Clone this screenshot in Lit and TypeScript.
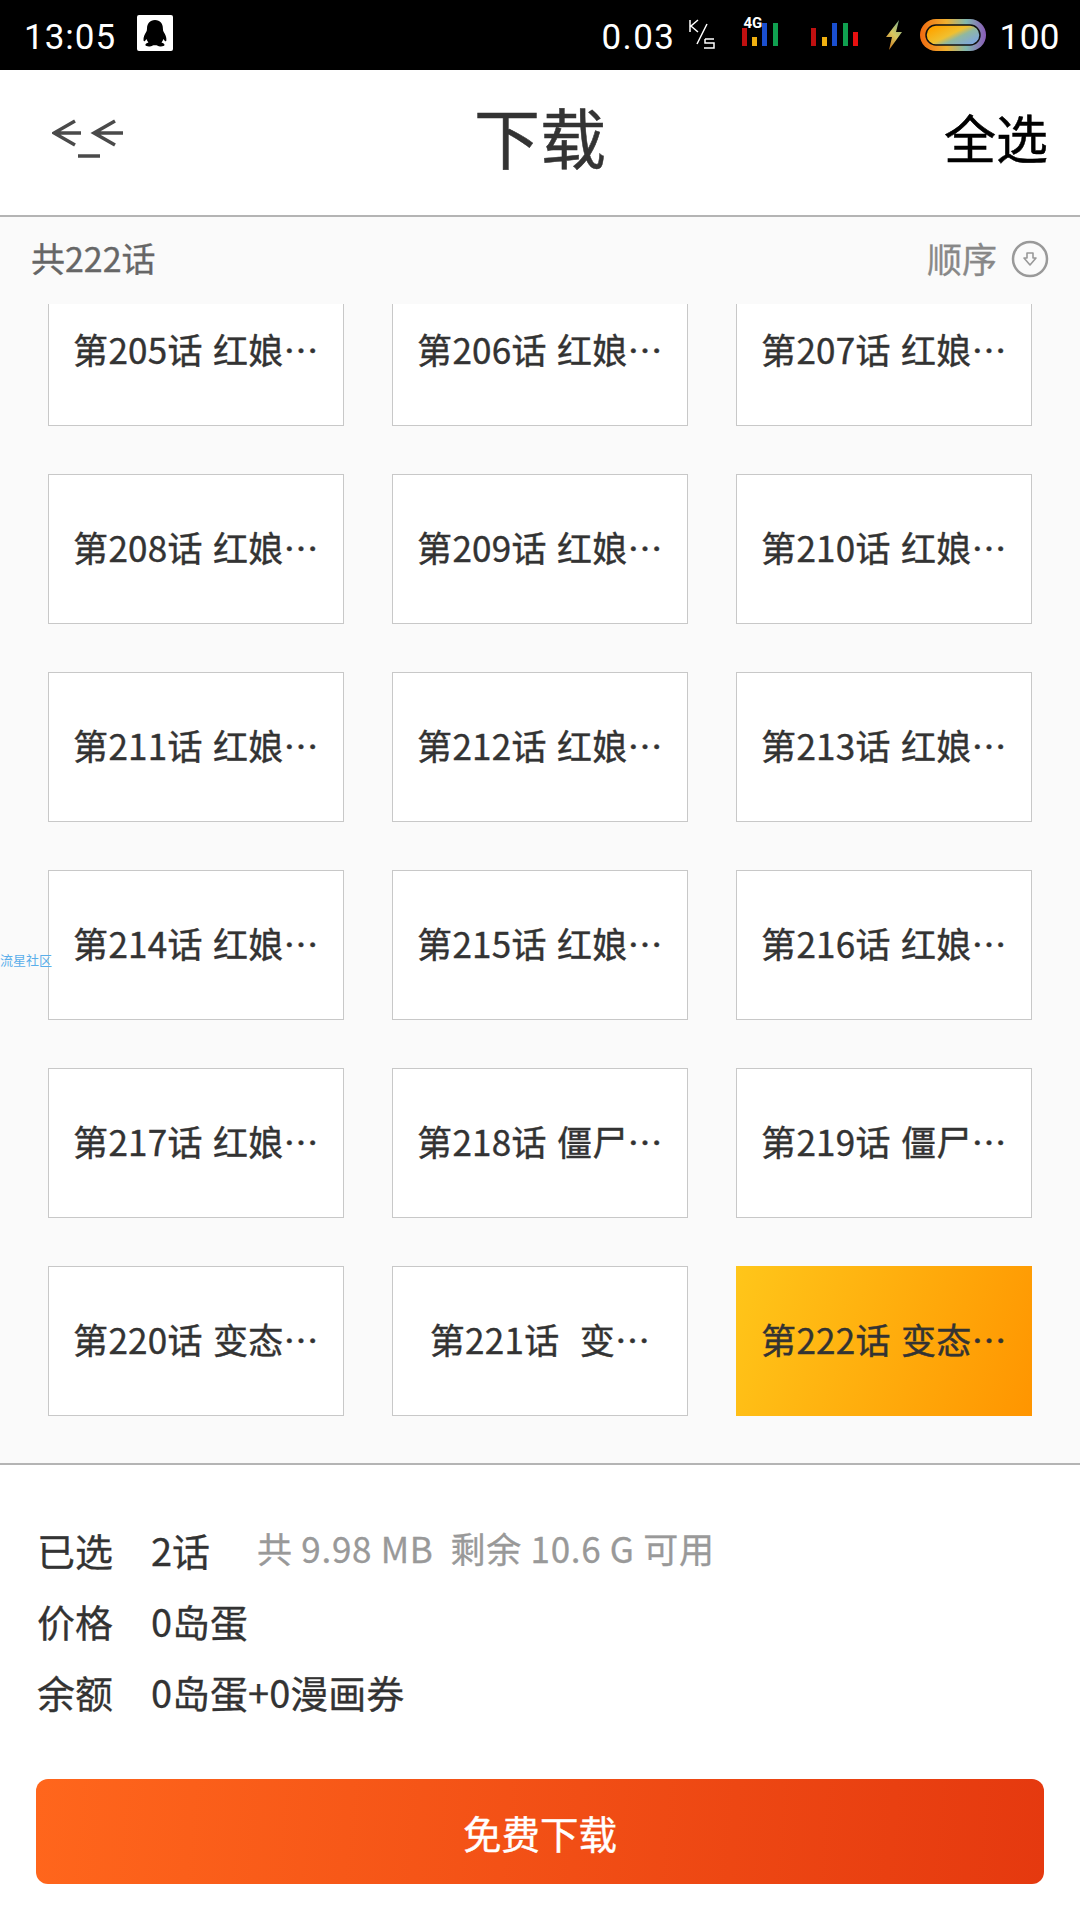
import { LitElement, html, css } from "lit";
import { customElement } from "lit/decorators.js";

interface Item { t: string; sel?: boolean; }
const ITEMS: Item[] = [
  ...[205, 206, 207, 208, 209, 210, 211, 212, 213, 214, 215, 216, 217].map((n) => ({ t: `第${n}话 红娘…` })),
  { t: "第218话 僵尸…" },
  { t: "第219话 僵尸…" },
  { t: "第220话 变态…" },
  { t: "第221话  变…" },
  { t: "第222话 变态…", sel: true },
];

@customElement("app-root")
export class AppRoot extends LitElement {
  static styles = css`
    :host { display: block; width: 1080px; height: 1920px; position: relative; overflow: hidden;
      background: #fff; font-family: "Noto Sans CJK SC", Roboto, sans-serif; }
    .status { height: 70px; background: #000; color: #fff; display: flex; align-items: center;
      font-family: Roboto, sans-serif; font-size: 35px; padding: 0 20px 0 24px; box-sizing: border-box; }
    .time { width: 113px; letter-spacing: 1px; margin-top: 5px; }
    .qq { width: 36px; height: 36px; background: #fff; border-radius: 2px; margin-top: -4px; display: block; }
    .spacer { flex: 1; }
    .speed { letter-spacing: 1.4px; margin-top: 5px; width: 87px; }
    .ks { display: block; width: 28px; height: 32px; }
    .net { position: relative; margin-left: 26px; width: 38px; height: 36px; }
    .net svg { display: block; width: 38px; height: 36px; }
    .g4 { position: absolute; left: 1px; top: 0; font-size: 15px; line-height: 13px; font-weight: 700; color: #fff; }
    .bars2 { display: block; margin-left: 31px; width: 50px; height: 32px; }
    .bolt { display: block; margin-left: 23px; width: 20px; height: 32px; }
    .batt { display: block; margin-left: 16px; width: 66px; height: 32px; }
    .pct { margin-left: 13px; margin-top: 5px; letter-spacing: 0.5px; }

    .nav { height: 147px; box-sizing: border-box; border-bottom: 2px solid #b4b4b4; display: grid;
      grid-template-columns: 1fr auto 1fr; align-items: center; padding: 0 32px; }
    .back { display: block; width: 72px; height: 42px; margin: -8px 0 0 20px; }
    .title { font-size: 66px; color: #333; line-height: 1; margin-top: -16px; -webkit-text-stroke: 0.5px #333; }
    .all { font-size: 52px; color: #000; justify-self: end; line-height: 1; margin-top: -12px; -webkit-text-stroke: 0.5px #000; }

    .main { background: #fafafa; height: 1248px; box-sizing: border-box; border-bottom: 2px solid #b4b4b4; display: flex; flex-direction: column; }
    .sub { height: 87px; flex: none; display: flex; align-items: center; justify-content: space-between;
      padding: 0 31px 6px 31px; box-sizing: border-box; }
    .count { font-size: 34px; color: #666; -webkit-text-stroke: 0.3px #666; }
    .order { display: flex; align-items: center; gap: 14px; font-size: 35px; color: #888; -webkit-text-stroke: 0.3px #888; }
    .order svg { display: block; width: 38px; height: 38px; margin-top: 2px; }
    .list { flex: 1; overflow: hidden; }
    .grid { display: grid; grid-template-columns: repeat(3, 296px); column-gap: 48px; row-gap: 48px;
      padding: 0 48px; margin-top: -28px; }
    .card { height: 150px; box-sizing: border-box; background: #fff; border: 1px solid #c8c8c8;
      display: flex; align-items: center; justify-content: center; font-size: 35px; letter-spacing: 0.3px;
      word-spacing: 2px; color: #333; white-space: pre; padding-bottom: 6px; -webkit-text-stroke: 0.4px #333; }
    .card.sel { border: 0; background: linear-gradient(110deg, #ffc61a, #ff9500); }

    .watermark { position: absolute; left: 0; top: 952px; font-size: 13px; color: #5aaeea; line-height: 16px; }

    .foot { padding: 49px 36px 0 37px; }
    .row { display: flex; align-items: center; height: 71px; color: #333; font-size: 38px; -webkit-text-stroke: 0.3px #333; }
    .label { width: 114px; font-size: 38px; flex: none; }
    .extra { color: #999; font-size: 35px; margin-left: 47px; margin-top: -5px; white-space: pre; letter-spacing: 0.7px;
      -webkit-text-stroke: 0.3px #999; }
    .btn { margin-top: 52px; margin-left: -1px; height: 105px; border-radius: 12px;
      background: linear-gradient(95deg, #ff661c, #e5390f); color: #fff; font-size: 38.5px; -webkit-text-stroke: 0.4px #fff;
      display: flex; align-items: center; justify-content: center; }
  `;

  render() {
    return html`
      <div class="status" lang="zh-CN">
        <span class="time">13:05</span>
        <svg class="qq" viewBox="0 0 36 36">
          <path fill="#000" d="M18 5c-5.2 0-8 3.800-8 8.400 0 1.400-.2 2.500-.8 3.600-1.400 2.400-3 5-2.700 8.200.1 1.200.8 1.400 1.500.7.5-.5 1-1.100 1.400-1.800.4 1.300 1.100 2.400 2 3.300-1.600.6-3.200 1.300-3 2.600.3 1.400 3.400 1.600 5.500 1.200 1.400-.3 2.400-.9 3.100-.9h1.900c.7 0 1.700.6 3.100.9 2.100.4 5.200.2 5.500-1.200.2-1.300-1.400-2-3-2.600.9-.9 1.600-2 2-3.300.4.7.9 1.300 1.400 1.800.7.7 1.400.5 1.500-.7.3-3.200-1.300-5.800-2.700-8.200-.6-1.100-.8-2.200-.8-3.600C26 8.800 23.200 5 18 5z"/>
        </svg>
        <span class="spacer"></span>
        <span class="speed">0.03</span>
        <svg class="ks" viewBox="0 0 28 32" fill="none" stroke="#fff" stroke-width="1.500">
          <path d="M2 1v12M10 1L3 7l7 6M19 5L9 25M17 20h9M17 20v4h9v5H16" />
        </svg>
        <div class="net">
          <svg viewBox="0 0 38 36">
            <rect x="0" y="11" width="5" height="18" fill="#c01010"/>
            <rect x="10" y="20" width="5" height="9" fill="#f0b010"/>
            <rect x="20" y="6" width="5" height="23" fill="#1a4fd0"/>
            <rect x="31" y="6" width="5" height="23" fill="#10a050"/>
          </svg>
          <span class="g4">4G</span>
        </div>
        <svg class="bars2" viewBox="0 0 50 32">
          <rect x="0" y="9" width="5" height="18" fill="#c01010"/>
          <rect x="11" y="18" width="5" height="9" fill="#f0b010"/>
          <rect x="21" y="4" width="5" height="23" fill="#1a4fd0"/>
          <rect x="32" y="4" width="5" height="23" fill="#10a050"/>
          <rect x="42" y="13" width="5" height="14" fill="#e81010"/>
        </svg>
        <svg class="bolt" viewBox="0 0 20 32">
          <defs><linearGradient id="b" x1="0.800" y1="0" x2="0.200" y2="1">
            <stop offset="0" stop-color="#7fb08a"/><stop offset="0.500" stop-color="#d8c860"/><stop offset="1" stop-color="#c8741a"/>
          </linearGradient></defs>
          <path fill="url(#b)" d="M15 1L2 18h6L5 31l13-18h-6z"/>
        </svg>
        <svg class="batt" viewBox="0 0 66 32">
          <defs>
            <linearGradient id="o" x1="0" y1="0" x2="1" y2="0">
              <stop offset="0" stop-color="#f06a10"/><stop offset="0.400" stop-color="#f0b030"/><stop offset="0.700" stop-color="#80b8b0"/><stop offset="1" stop-color="#8a5ab8"/>
            </linearGradient>
            <linearGradient id="i" x1="0.100" y1="0.200" x2="0.900" y2="0.800">
              <stop offset="0" stop-color="#ffa500"/><stop offset="0.450" stop-color="#f0c030"/><stop offset="0.650" stop-color="#90b8a0"/><stop offset="1" stop-color="#80a8d8"/>
            </linearGradient>
          </defs>
          <rect x="0" y="0" width="66" height="32" rx="16" fill="url(#o)"/>
          <rect x="6" y="6" width="54" height="20" rx="10" fill="url(#i)" stroke="#111" stroke-width="1.500"/>
        </svg>
        <span class="pct">100</span>
      </div>

      <div class="nav" lang="zh-CN">
        <svg class="back" viewBox="0 0 72 42" fill="none" stroke="#4a4a4a" stroke-width="3.500">
          <path d="M23 3L2 15l21 12M2 15h27"/>
          <path d="M63 3L42 15l21 12M42 15h29"/>
          <path d="M26 38h22"/>
        </svg>
        <span class="title">下载</span>
        <span class="all">全选</span>
      </div>

      <div class="main" lang="zh-CN">
        <div class="sub">
          <span class="count">共222话</span>
          <span class="order">顺序
            <svg viewBox="0 0 38 38" fill="none">
              <circle cx="19" cy="19" r="17" stroke="#999" stroke-width="2.500"/>
              <path d="M16 13h6v5h3l-6 7-6-7h3z" stroke="#999" stroke-width="1.600" stroke-linejoin="round"/>
            </svg>
          </span>
        </div>
        <div class="list">
          <div class="grid">
            ${ITEMS.map((i) => html`<div class="card ${i.sel ? "sel" : ""}">${i.t}</div>`)}
          </div>
        </div>
      </div>

      <div class="watermark" lang="zh-CN">流星社区</div>

      <div class="foot" lang="zh-CN">
        <div class="row"><span class="label">已选</span><span>2话</span><span class="extra">共 9.98 MB  剩余 10.6 G 可用</span></div>
        <div class="row"><span class="label">价格</span><span>0岛蛋</span></div>
        <div class="row"><span class="label">余额</span><span>0岛蛋+0漫画券</span></div>
        <div class="btn">免费下载</div>
      </div>
    `;
  }
}
